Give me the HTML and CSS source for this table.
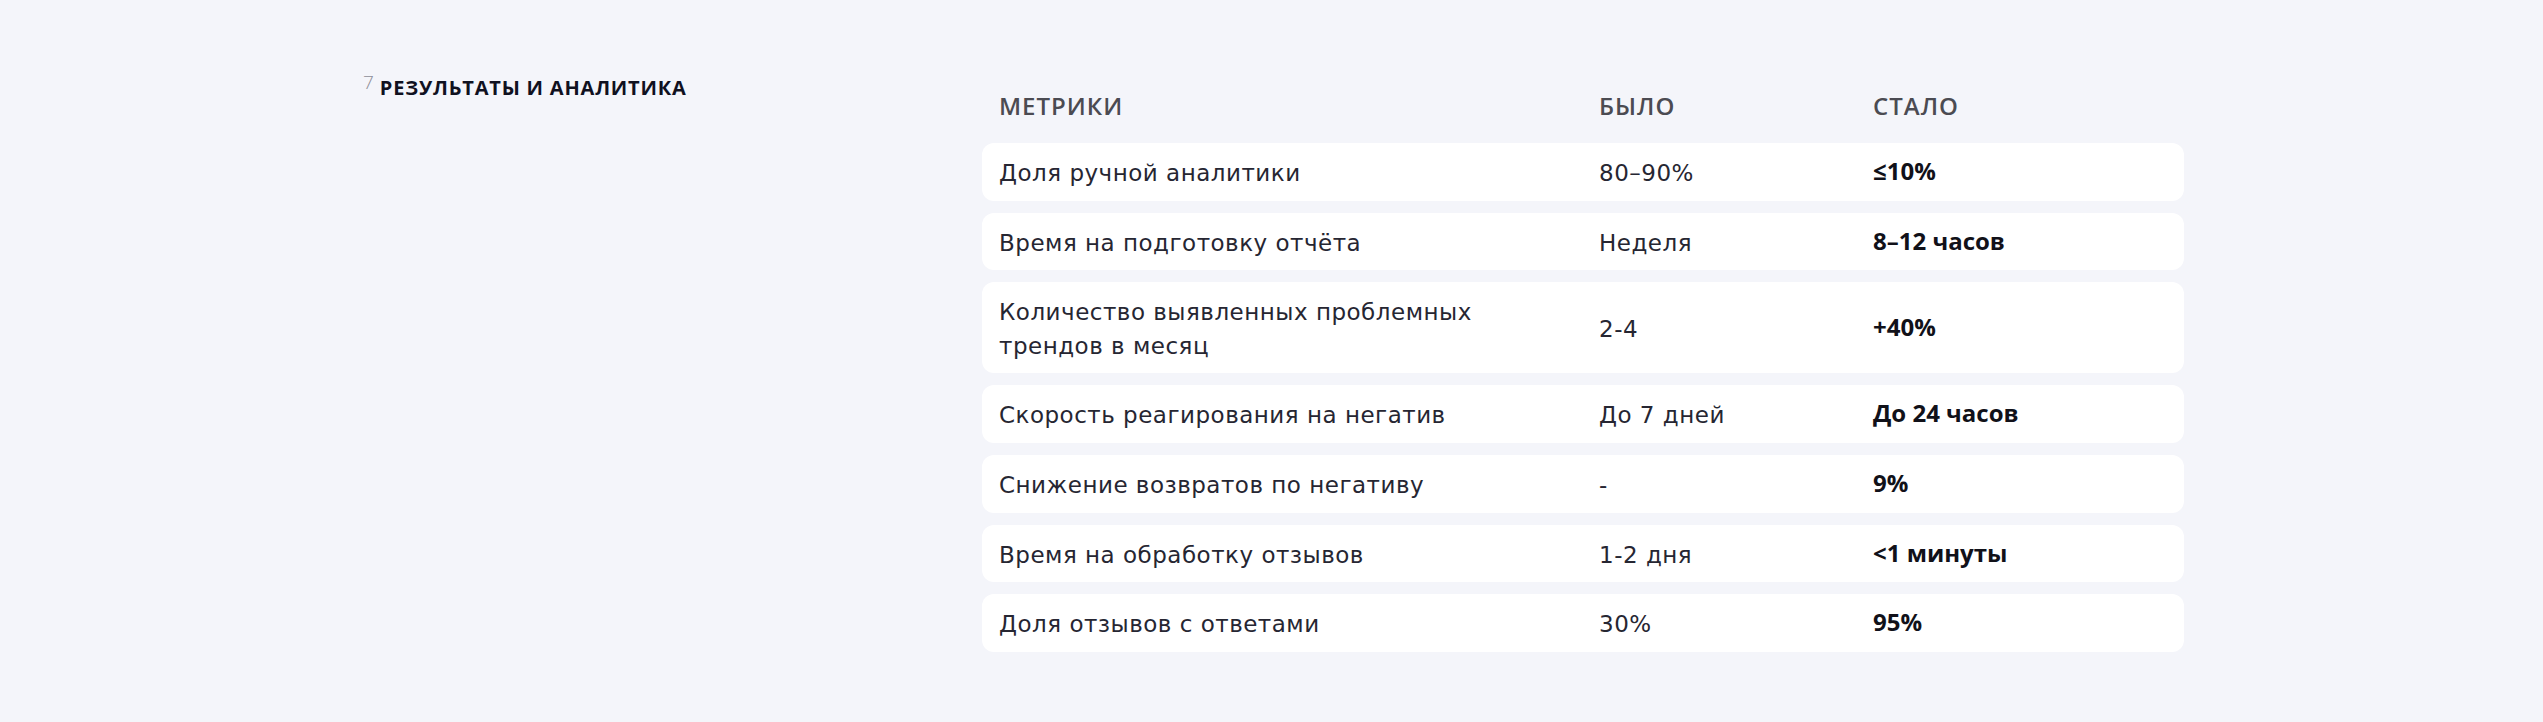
FILE: index.html
```html
<!DOCTYPE html>
<html lang="ru">
<head>
<meta charset="utf-8">
<title>Результаты и аналитика</title>
<link rel="stylesheet" href="styles.css">
</head>
<body>
<main class="section">
  <h2 class="section-title"><span class="section-num">7</span><span class="section-name">РЕЗУЛЬТАТЫ И АНАЛИТИКА</span></h2>
  <div class="metrics">
    <div class="metrics-head">
      <span>МЕТРИКИ</span>
      <span>БЫЛО</span>
      <span>СТАЛО</span>
    </div>
    <div class="metrics-row">
      <span class="cell-name">Доля ручной аналитики</span>
      <span class="cell-before">80–90%</span>
      <span class="cell-after">≤10%</span>
    </div>
    <div class="metrics-row">
      <span class="cell-name">Время на подготовку отчёта</span>
      <span class="cell-before">Неделя</span>
      <span class="cell-after">8–12 часов</span>
    </div>
    <div class="metrics-row">
      <span class="cell-name">Количество выявленных проблемных трендов в месяц</span>
      <span class="cell-before">2-4</span>
      <span class="cell-after">+40%</span>
    </div>
    <div class="metrics-row">
      <span class="cell-name">Скорость реагирования на негатив</span>
      <span class="cell-before">До 7 дней</span>
      <span class="cell-after">До 24 часов</span>
    </div>
    <div class="metrics-row">
      <span class="cell-name">Снижение возвратов по негативу</span>
      <span class="cell-before">-</span>
      <span class="cell-after">9%</span>
    </div>
    <div class="metrics-row">
      <span class="cell-name">Время на обработку отзывов</span>
      <span class="cell-before">1-2 дня</span>
      <span class="cell-after">&lt;1 минуты</span>
    </div>
    <div class="metrics-row">
      <span class="cell-name">Доля отзывов с ответами</span>
      <span class="cell-before">30%</span>
      <span class="cell-after">95%</span>
    </div>
  </div>
</main>
</body>
</html>
```

FILE: styles.css
```css
html, body {
  margin: 0;
  padding: 0;
}

body {
  background: #f4f5fa;
  font-family: "Open Sans", "Noto Sans", sans-serif;
  color: #1f1f2b;
  min-height: 722px;
}

.section {
  display: grid;
  grid-template-columns: 619px 1fr;
  padding: 73px 359px 0 363px;
}

.section-title {
  margin: 0;
  display: flex;
  align-items: flex-start;
  gap: 6px;
  font-weight: 700;
}

.section-num {
  font-size: 19px;
  line-height: 19px;
  font-weight: 300;
  color: #8e8e98;
}

.section-name {
  margin-top: 3px;
  font-size: 20px;
  line-height: 24px;
  letter-spacing: 0.8px;
  color: #10111f;
}

.metrics {
  margin-top: 16px;
  display: flex;
  flex-direction: column;
  gap: 12px;
}

.metrics-head,
.metrics-row {
  display: grid;
  grid-template-columns: 600px 274px 1fr;
  padding: 0 17px;
  font-size: 24px;
}

.metrics-row > .cell-name {
  padding-right: 40px;
}

.metrics-head {
  line-height: 34px;
  font-weight: 600;
  letter-spacing: 1px;
  color: #4b4b52;
  margin-bottom: 8px;
}

.metrics-row {
  align-items: center;
  background: #ffffff;
  border-radius: 12px;
  padding-top: 11px;
  padding-bottom: 13px;
  line-height: 33.6px;
}

.cell-name,
.cell-before {
  font-family: "DejaVu Sans", "Open Sans", sans-serif;
  font-size: 23px;
  letter-spacing: 0.5px;
  font-weight: 400;
  color: #262632;
  margin-top: 3px;
  margin-bottom: -3px;
}

.cell-after {
  font-weight: 700;
  color: #111119;
}
```
